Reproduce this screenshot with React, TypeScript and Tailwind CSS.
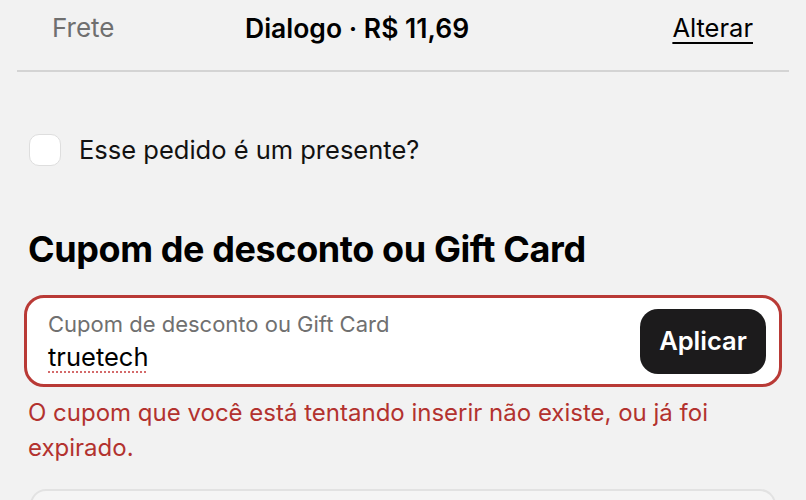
import React from "react";

export default function App() {
  return (
    <div
      className="w-[806px] h-[500px] overflow-hidden bg-[#f2f2f2] text-black"
      style={{ fontFamily: "Inter, 'Noto Sans', sans-serif" }}
    >
      <div className="px-[17px]">
        <div className="flex items-center h-[56px] pl-[35px] pr-[36px] text-[26px] leading-none">
          <span className="text-[#6f6f6f] w-[193px]">Frete</span>
          <span className="font-semibold flex-1 text-[26.5px]">Dialogo · R$ 11,69</span>
          <span className="text-[25.5px] underline underline-offset-[5px] decoration-[2px]">Alterar</span>
        </div>
        <div className="mt-[14px] h-[2px] bg-[#d4d4d4]" />
      </div>

      <div className="flex items-center gap-[18px] pl-[29px] mt-[62px]">
        <div className="w-[32px] h-[32px] rounded-[10px] bg-white border border-[#dedede]" />
        <span className="text-[25.5px] leading-none text-[#111]">Esse pedido é um presente?</span>
      </div>

      <h2 className="pl-[28px] mt-[65px] text-[36px] font-bold leading-none tracking-[-0.4px]">
        Cupom de desconto ou Gift Card
      </h2>

      <div className="mx-[24px] mt-[28px] h-[92px] rounded-[20px] border-[3px] border-[#b93a36] bg-white flex items-center pl-[21px] pr-[13px]">
        <div className="flex-1 flex flex-col">
          <span className="text-[22px] leading-none text-[#707070]">Cupom de desconto ou Gift Card</span>
          <span className="mt-[9px] text-[25.5px] leading-none w-fit underline decoration-dotted decoration-[#d46a6a] decoration-[2px] underline-offset-[6px]">
            truetech
          </span>
        </div>
        <button className="w-[126px] h-[65px] rounded-[18px] bg-[#1c1b1c] text-white text-[25.5px] font-semibold">
          Aplicar
        </button>
      </div>

      <p className="pl-[28px] pr-[40px] mt-[8px] text-[24px] leading-[35px] text-[#b3322f]">
        O cupom que você está tentando inserir não existe, ou já foi expirado.
      </p>

      <div className="mx-[30px] mt-[24px] h-[40px] rounded-[16px] border-2 border-[#e2e2e2] bg-[#f5f5f5]" />
    </div>
  );
}
